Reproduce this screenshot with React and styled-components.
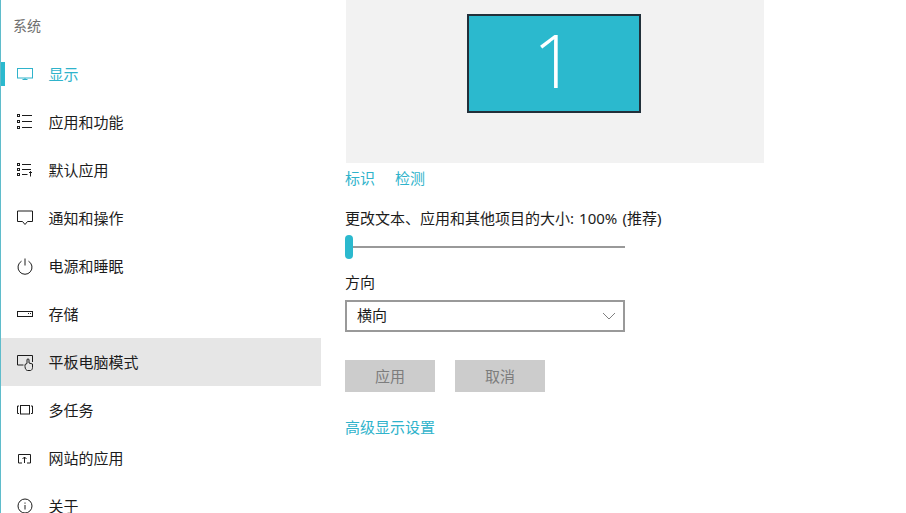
import React from "react";
import styled, { createGlobalStyle } from "styled-components";

const Global = createGlobalStyle`
  html, body { margin: 0; padding: 0; background: #fff; overflow: hidden; }
  body { font-family: "Noto Sans", "Noto Sans CJK SC", sans-serif; }
  #root { width: 906px; height: 513px; overflow: hidden; }
`;
const Page = styled.div`display: flex; width: 906px; height: 513px; overflow: hidden; background: #fff; color: #1a1a1a;`;
const Sidebar = styled.nav`width: 320px; flex: none; border-left: 1px solid #5fbccb; display: flex; flex-direction: column; height: 513px; overflow: hidden;`;
const SectionTitle = styled.div`flex: none; height: 50px; padding: 17px 0 0 12px; box-sizing: border-box; font-size: 14px; line-height: 18px; color: #6e6e6e;`;
const Item = styled.div`
  position: relative; flex: none; height: 48px; display: flex; align-items: center; box-sizing: border-box;
  padding: 0 0 2px 13px; font-size: 15px; color: ${p => (p.$active ? "#2fb3cb" : "#1c1c1c")};
  background: ${p => (p.$hover ? "#e6e6e6" : "transparent")};
`;
const Marker = styled.span`position: absolute; left: -1px; top: 12px; width: 5px; height: 24px; background: #2bb9ce;`;
const IconBox = styled.span`width: 20px; height: 20px; flex: none; margin-right: 14.5px; display: flex; color: ${p => (p.$active ? "#2fb3cb" : "#1c1c1c")};`;
const Main = styled.main`flex: 1; padding-left: 24px; display: flex; flex-direction: column; align-items: flex-start;`;
const Preview = styled.div`margin-left: 1px; width: 418px; height: 163px; background: #f2f2f2; display: flex; justify-content: center; padding: 14px 2px 0 0; box-sizing: border-box;`;
const Monitor = styled.div`width: 174px; height: 99px; box-sizing: border-box; border: 2px solid #22303a; background: #2bb9ce; color: #fff; display: flex; align-items: center; justify-content: center; font-family: "Open Sans", sans-serif; font-weight: 300; font-size: 74px; line-height: 1; padding-bottom: 7px;`;
const LinkRow = styled.div`display: flex; gap: 20px; margin-top: 5px; height: 20px; font-size: 15px; line-height: 20px;`;
const Link = styled.a`color: #2fb3cb; font-size: 15px; line-height: 20px;`;
const Label = styled.div`font-size: 15px; line-height: 20px; color: #1c1c1c; word-spacing: 1.2px; margin-top: ${p => p.$top}px;`;
const Slider = styled.div`position: relative; width: 280px; height: 24px; margin-top: 7px; display: flex; align-items: center;`;
const Track = styled.div`width: 100%; height: 2px; background: #999;`;
const Thumb = styled.span`position: absolute; left: 0; top: 0; width: 8px; height: 24px; border-radius: 4px; background: #2bb9ce;`;
const Select = styled.div`width: 280px; height: 32px; box-sizing: border-box; border: 2px solid #999; margin-top: 8px; display: flex; align-items: center; justify-content: space-between; padding: 0 7px 0 10px; font-size: 15px; color: #1c1c1c;`;
const SelectText = styled.span`padding-bottom: 3px;`;
const Buttons = styled.div`display: flex; gap: 20px; margin-top: 28px;`;
const Button = styled.button`width: 90px; height: 32px; border: 0; padding: 0 0 1px; background: #ccc; color: #7d7d7d; font: inherit; font-size: 15px;`;
const BottomLink = styled(Link)`margin-top: 25px;`;

const Svg = ({ children }) => (
  <svg width="20" height="20" viewBox="0 0 20 20" fill="none" stroke="currentColor" strokeWidth="1">{children}</svg>
);
const dots = ys => ys.map(y => <rect key={y} x="3.5" y={y} width="2" height="2" />);
const icons = {
  display: <Svg><rect x="3.5" y="5.5" width="15" height="9.5" /><path d="M11 15v1.500M8.500 16.500h5" /></Svg>,
  apps: <Svg>{dots([3.5, 9.5, 15.5])}<path d="M8 4.500h10M8 10.500h10M8 16.500h10" /></Svg>,
  defaults: <Svg>{dots([4.5, 9.5, 14.5])}<path d="M8 5.500h9M8 10.500h9M8 15.500h5.500M16.500 17.500v-5M15 14l1.500-1.500L18 14" /></Svg>,
  notify: <Svg><path d="M3.500 4h15v10.500h-5l-2.500 3-2.500-3h-5z" /></Svg>,
  power: <Svg><path d="M7.500 6.200a7 7 0 1 0 7 0M11 3.500v7" /></Svg>,
  storage: <Svg><rect x="3.500" y="8.500" width="15" height="5" /><path d="M14 10.500h1M16 10.500h1" /></Svg>,
  tablet: <Svg><path d="M9.500 14H3.500V4.500h15V11" /><path d="M11 15.500v-2l2-1V9c0-1.600 2-1.600 2 0v3l3.500 1v3.500c0 1.500-1 3-2 3h-3c-1 0-2.500-1.500-2.500-4z" /></Svg>,
  multi: <Svg><rect x="6.500" y="6.500" width="9" height="8.500" /><path d="M5 7H3.500v7.500H5M17 7h1.500v7.500H17" /></Svg>,
  web: <Svg><path d="M8 16H4.500V7.500h12V16H13" /><path d="M10.500 16v-6M8.500 12l2-2 2 2" /></Svg>,
  about: <Svg><circle cx="11" cy="11" r="7" /><path d="M11 10v4.500M11 7.500v1.200" /></Svg>,
};
const items = [
  ["display", "显示", true], ["apps", "应用和功能"], ["defaults", "默认应用"], ["notify", "通知和操作"],
  ["power", "电源和睡眠"], ["storage", "存储"], ["tablet", "平板电脑模式", false, true],
  ["multi", "多任务"], ["web", "网站的应用"], ["about", "关于"],
];

export default function App() {
  return (
    <Page>
      <Global />
      <Sidebar>
        <SectionTitle>系统</SectionTitle>
        {items.map(([k, t, a, h]) => (
          <Item key={k} $active={a} $hover={h}>
            {a && <Marker />}
            <IconBox $active={a}>{icons[k]}</IconBox>
            {t}
          </Item>
        ))}
      </Sidebar>
      <Main>
        <Preview><Monitor>1</Monitor></Preview>
        <LinkRow><Link>标识</Link><Link>检测</Link></LinkRow>
        <Label $top={20}>更改文本、应用和其他项目的大小: 100% (推荐)</Label>
        <Slider><Track /><Thumb /></Slider>
        <Label $top={13}>方向</Label>
        <Select>
          <SelectText>横向</SelectText>
          <svg width="14" height="8" viewBox="0 0 14 8" fill="none" stroke="#808080" strokeWidth="1"><path d="M1 1l6 6 6-6" /></svg>
        </Select>
        <Buttons><Button>应用</Button><Button>取消</Button></Buttons>
        <BottomLink>高级显示设置</BottomLink>
      </Main>
    </Page>
  );
}
